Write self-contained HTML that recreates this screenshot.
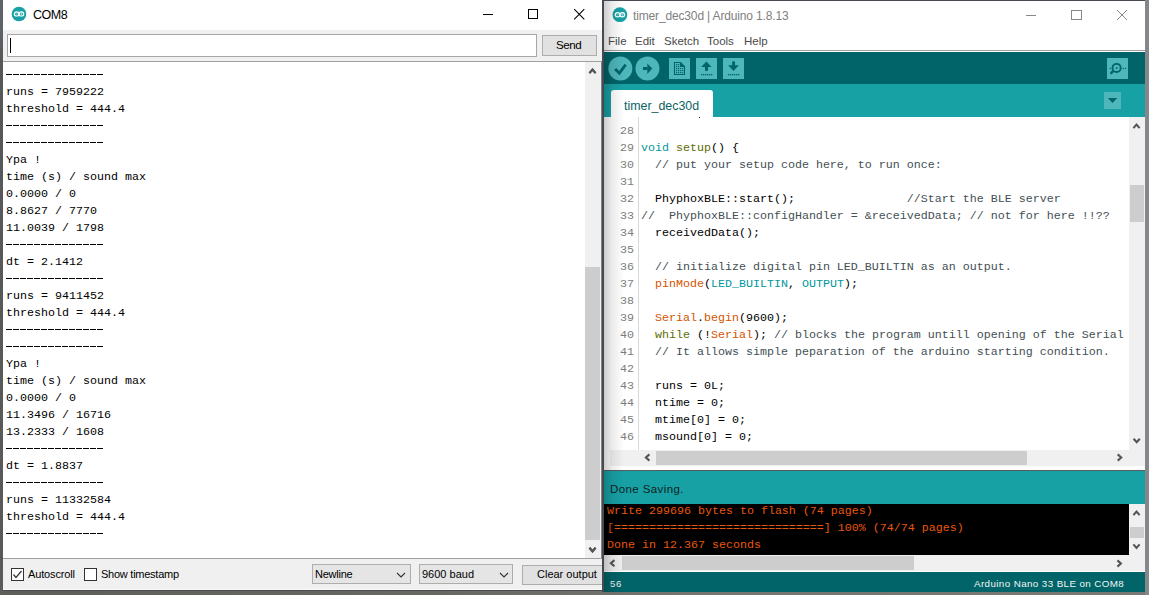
<!DOCTYPE html>
<html><head><meta charset="utf-8">
<style>
*{margin:0;padding:0;box-sizing:border-box}
html,body{width:1149px;height:595px;overflow:hidden;background:#6a6c6e}
body{position:relative;font-family:"Liberation Sans",sans-serif}
.a{position:absolute}
.mono{font-family:"Liberation Mono",monospace;font-size:11.67px;white-space:pre;line-height:17px}
.ui{font-size:11px;color:#000;white-space:pre;line-height:13px}
.dash{left:6px;width:98px;height:1px;background:repeating-linear-gradient(to right,#000 0,#000 6px,transparent 6px,transparent 7px)}
.k{color:#00979C}.f{color:#D35400}.o{color:#5E6D03}.c{color:#434F54}
</style></head><body>
<!-- desktop -->
<div class="a" style="left:0;top:0;width:3px;height:595px;background:linear-gradient(#5e6368,#5e6368 30px,#55585a 60px,#5a5a58)"></div>
<div class="a" style="left:0;top:590px;width:1149px;height:5px;background:linear-gradient(to right,#5f5e5b,#6a6864 40%,#767471 60%,#7a7875)"></div>
<div class="a" style="left:3px;top:590px;width:599px;height:1px;background:#4a4a48"></div>
<div class="a" style="left:1145px;top:0;width:4px;height:595px;background:#85878a"></div>

<!-- ============ COM8 window ============ -->
<div class="a" style="left:3px;top:0;width:599px;height:590px;background:#fff"></div>
<!-- title -->
<svg class="a" style="left:11px;top:6px" width="16" height="16"><circle cx="8" cy="8" r="7.3" fill="#16A1A4"/><g fill="none" stroke="#fff" stroke-width="1.2"><ellipse cx="5.7" cy="7.9" rx="2.4" ry="2.1"/><ellipse cx="10.3" cy="7.9" rx="2.4" ry="2.1"/></g><path d="M4.6 8 H6.6 M9.4 8 H11.4 M10.4 7 V9" stroke="#bfe6e7" stroke-width="0.7"/></svg>
<div class="a" style="left:33px;top:8px;font-size:12.5px;color:#000;letter-spacing:-0.5px">COM8</div>
<svg class="a" style="left:470px;top:0" width="130" height="30">
  <line x1="13" y1="14.5" x2="23" y2="14.5" stroke="#000" stroke-width="1"/>
  <rect x="58.5" y="9.5" width="9" height="9" fill="none" stroke="#000" stroke-width="1"/>
  <path d="M104.2 9.2 L114.3 19.3 M114.3 9.2 L104.2 19.3" stroke="#000" stroke-width="1.05"/>
</svg>
<!-- input panel -->
<div class="a" style="left:3px;top:30px;width:599px;height:31px;background:#F0F0F0"></div>
<div class="a" style="left:3px;top:61px;width:599px;height:1px;background:#A0A0A0"></div>
<div class="a" style="left:7px;top:34px;width:530px;height:23px;background:#fff;border:1px solid #A6A6A6"></div>
<div class="a" style="left:10px;top:38px;width:1px;height:15px;background:#000"></div>
<div class="a" style="left:542px;top:35px;width:55px;height:21px;background:#E1E1E1;border:1px solid #ADADAD"></div>
<div class="a ui" style="left:556px;top:37.5px;font-size:11.6px;letter-spacing:-0.45px">Send</div>
<!-- serial text -->
<div class="a mono" style="left:6px;top:67px;color:#000">
runs = 7959222
threshold = 444.4


Ypa !
time (s) / sound max
0.0000 / 0
8.8627 / 7770
11.0039 / 1798

dt = 2.1412

runs = 9411452
threshold = 444.4


Ypa !
time (s) / sound max
0.0000 / 0
11.3496 / 16716
13.2333 / 1608

dt = 1.8837

runs = 11332584
threshold = 444.4
</div>
<div class="a dash" style="top:74px"></div>
<div class="a dash" style="top:125px"></div>
<div class="a dash" style="top:142px"></div>
<div class="a dash" style="top:244px"></div>
<div class="a dash" style="top:278px"></div>
<div class="a dash" style="top:329px"></div>
<div class="a dash" style="top:346px"></div>
<div class="a dash" style="top:448px"></div>
<div class="a dash" style="top:482px"></div>
<div class="a dash" style="top:533px"></div>
<!-- scrollbar -->
<div class="a" style="left:585px;top:62px;width:15px;height:496px;background:#F0F0F0"></div>
<div class="a" style="left:585px;top:267px;width:15px;height:273px;background:#CDCDCD"></div>
<div class="a" style="left:600px;top:62px;width:1px;height:496px;background:#F2F2F2"></div>
<div class="a" style="left:601px;top:62px;width:1px;height:497px;background:#7d848c"></div>
<svg class="a" style="left:585px;top:62px" width="15" height="496">
</svg>
<!-- bottom bar -->
<div class="a" style="left:3px;top:558px;width:599px;height:32px;background:#F0F0F0;border-top:1px solid #A0A0A0;border-bottom:1px solid #fafafa"></div>
<div class="a" style="left:11px;top:568px;width:13px;height:13px;background:#fff;border:1px solid #333"></div>
<svg class="a" style="left:11px;top:568px" width="13" height="13"><path d="M2.5 6.5 L5 9.5 L10.5 3" fill="none" stroke="#333" stroke-width="1.2"/></svg>
<div class="a ui" style="left:28px;top:568px;letter-spacing:-0.15px">Autoscroll</div>
<div class="a" style="left:84px;top:568px;width:13px;height:13px;background:#fff;border:1px solid #333"></div>
<div class="a ui" style="left:101px;top:568px;letter-spacing:-0.25px">Show timestamp</div>
<div class="a" style="left:312px;top:564px;width:99px;height:20px;background:#E5E5E5;border:1px solid #ADADAD"></div>
<div class="a ui" style="left:315px;top:568px;letter-spacing:-0.25px">Newline</div>
<svg class="a" style="left:396px;top:571px" width="10" height="8"><path d="M1 2 L5 6 L9 2" fill="none" stroke="#333" stroke-width="1.1"/></svg>
<div class="a" style="left:419px;top:564px;width:94px;height:20px;background:#E5E5E5;border:1px solid #ADADAD"></div>
<div class="a ui" style="left:422px;top:568px">9600 baud</div>
<svg class="a" style="left:498.5px;top:571px" width="10" height="8"><path d="M1 2 L5 6 L9 2" fill="none" stroke="#333" stroke-width="1.1"/></svg>
<div class="a" style="left:522px;top:565px;width:82px;height:20px;background:#E1E1E1;border:1px solid #ADADAD"></div>
<div class="a ui" style="left:537px;top:568px">Clear output</div>

<!-- ============ Arduino window ============ -->
<div class="a" style="left:602px;top:0;width:2px;height:592px;background:#474b51"></div>
<div class="a" style="left:604px;top:0;width:541px;height:592px;background:#fff;border-top:1px solid #474b51"></div>
<svg class="a" style="left:612px;top:7px" width="16" height="16"><circle cx="7.9" cy="7.7" r="7.4" fill="#16A1A4"/><g fill="none" stroke="#fff" stroke-width="1.2"><ellipse cx="5.6" cy="7.7" rx="2.4" ry="2.1"/><ellipse cx="10.2" cy="7.7" rx="2.4" ry="2.1"/></g><path d="M4.4 7.8 H6.4 M9.2 7.8 H11.2 M10.2 6.8 V8.8" stroke="#bfe6e7" stroke-width="0.7"/></svg>
<div class="a" style="left:633px;top:9px;font-size:12px;color:#808080;letter-spacing:-0.15px;white-space:pre">timer_dec30d | Arduino 1.8.13</div>
<svg class="a" style="left:1010px;top:0" width="135" height="30">
  <line x1="16" y1="15.5" x2="26" y2="15.5" stroke="#888" stroke-width="1"/>
  <rect x="61.5" y="10.5" width="10" height="9" fill="none" stroke="#888" stroke-width="1"/>
  <path d="M107 10 L117 20 M117 10 L107 20" stroke="#888" stroke-width="1"/>
</svg>
<!-- menu -->
<div class="a" style="left:608px;top:34.5px;font-size:11.5px;color:#4a4a4a;white-space:pre">File</div>
<div class="a" style="left:635px;top:34.5px;font-size:11.5px;color:#4a4a4a;white-space:pre">Edit</div>
<div class="a" style="left:664px;top:34.5px;font-size:11.5px;color:#4a4a4a;white-space:pre">Sketch</div>
<div class="a" style="left:707px;top:34.5px;font-size:11.5px;color:#4a4a4a;white-space:pre">Tools</div>
<div class="a" style="left:744px;top:34.5px;font-size:11.5px;color:#4a4a4a;white-space:pre">Help</div>
<div class="a" style="left:604px;top:50px;width:541px;height:1px;background:#A0A0A0"></div>
<!-- toolbar -->
<div class="a" style="left:604px;top:52px;width:541px;height:32px;background:#006468"></div>
<svg class="a" style="left:604px;top:52px" width="541" height="32">
  <g fill="#4DB7BB">
    <circle cx="16.35" cy="16.4" r="12"/>
    <circle cx="43.45" cy="16.4" r="12"/>
    <rect x="65" y="6" width="21" height="21"/>
    <rect x="92" y="6" width="21" height="21"/>
    <rect x="119" y="6" width="21" height="21"/>
    <rect x="503" y="6" width="21" height="21"/>
  </g>
  <path d="M11.1 16.9 L15.4 21.2 L21.7 12.6" fill="none" stroke="#006468" stroke-width="2.8"/>
  <rect x="39" y="15" width="4.5" height="3" fill="#006468"/>
  <path d="M43.3 11.6 L48.3 16.5 L43.3 21.9 Z" fill="#006468"/>
  <path d="M70.5 10.5 L76.5 10.5 L80.5 14.5 L80.5 22.5 L70.5 22.5 Z" fill="none" stroke="#006468" stroke-width="1.1"/>
  <path d="M76 10 L81 15 L76 15 Z" fill="#006468"/>
  <g fill="#006468">
    <rect x="72" y="12" width="1.2" height="1.2"/><rect x="74" y="12" width="1.2" height="1.2"/>
    <rect x="72" y="14" width="1.2" height="1.2"/><rect x="74" y="14" width="1.2" height="1.2"/>
    <rect x="72" y="16" width="1.2" height="1.2"/><rect x="74" y="16" width="1.2" height="1.2"/><rect x="76" y="16" width="1.2" height="1.2"/><rect x="78" y="16" width="1.2" height="1.2"/>
    <rect x="72" y="18" width="1.2" height="1.2"/><rect x="74" y="18" width="1.2" height="1.2"/><rect x="76" y="18" width="1.2" height="1.2"/><rect x="78" y="18" width="1.2" height="1.2"/>
    <rect x="72" y="20" width="1.2" height="1.2"/><rect x="74" y="20" width="1.2" height="1.2"/><rect x="76" y="20" width="1.2" height="1.2"/><rect x="78" y="20" width="1.2" height="1.2"/>
  </g>
  <path d="M97.2 15 L102.4 9.4 L107.6 15 Z" fill="#006468"/>
  <rect x="101" y="14.5" width="3" height="4.3" fill="#006468"/>
  <path d="M124.2 13.3 L134.8 13.3 L129.5 18.9 Z" fill="#006468"/>
  <rect x="128.2" y="9.4" width="2.8" height="4.3" fill="#006468"/>
  <g fill="#006468">
    <rect x="97" y="22" width="1.3" height="1.3"/><rect x="99" y="22" width="1.3" height="1.3"/><rect x="101" y="22" width="1.3" height="1.3"/><rect x="103" y="22" width="1.3" height="1.3"/><rect x="105" y="22" width="1.3" height="1.3"/><rect x="107" y="22" width="1.3" height="1.3"/>
    <rect x="124" y="22" width="1.3" height="1.3"/><rect x="126" y="22" width="1.3" height="1.3"/><rect x="128" y="22" width="1.3" height="1.3"/><rect x="130" y="22" width="1.3" height="1.3"/><rect x="132" y="22" width="1.3" height="1.3"/><rect x="134" y="22" width="1.3" height="1.3"/>
  </g>
  <circle cx="512.6" cy="15.9" r="4.1" fill="none" stroke="#006468" stroke-width="1.8"/>
  <rect x="511.9" y="15.2" width="1.6" height="1.6" fill="#006468"/>
  <path d="M509.3 18.9 L506.6 21.8" stroke="#006468" stroke-width="2.4"/>
  <g fill="#006468"><rect x="505.8" y="15.9" width="1.2" height="1.2"/><rect x="518.7" y="15.9" width="1.2" height="1.2"/><rect x="521" y="15.9" width="1.2" height="1.2"/></g>
</svg>
<!-- tab band -->
<div class="a" style="left:604px;top:84px;width:541px;height:33px;background:#17A1A5"></div>
<div class="a" style="left:611px;top:90px;width:102px;height:27px;background:#fff;border-radius:3px 3px 0 0"></div>
<div class="a" style="left:624px;top:99px;font-size:12.4px;color:#0B6265;white-space:pre">timer_dec30d</div>
<div class="a" style="left:1104px;top:92px;width:17px;height:17px;background:#4DB7BB"></div>
<svg class="a" style="left:1104px;top:92px" width="17" height="17"><path d="M3.9 6.1 L13.3 6.1 L8.5 10.9 Z" fill="#006468"/></svg>
<!-- editor -->
<div class="a" style="left:604px;top:117px;width:525px;height:333px;background:#fff"></div>
<div class="a" style="left:638px;top:117px;width:1px;height:333px;background:#D8D8D8"></div>
<div class="a mono" style="left:613px;top:123px;color:#7c7c7c;text-align:right;width:21px;-webkit-text-stroke:0">28
29
30
31
32
33
34
35
36
37
38
39
40
41
42
43
44
45
46</div>
<div class="a mono" style="left:641px;top:123px;color:#000">
<span class="k">void</span> <span class="o">setup</span>() {
  <span class="c">// put your setup code here, to run once:</span>

  PhyphoxBLE::start();                <span class="c">//Start the BLE server</span>
<span class="c">//  PhyphoxBLE::configHandler = &amp;receivedData; // not for here !!??</span>
  receivedData();

  <span class="c">// initialize digital pin LED_BUILTIN as an output.</span>
  <span class="f">pinMode</span>(<span class="k">LED_BUILTIN</span>, <span class="k">OUTPUT</span>);

  <span class="f">Serial</span>.<span class="f">begin</span>(9600);
  <span class="o">while</span> (!<span class="f">Serial</span>); <span class="c">// blocks the program untill opening of the Serial</span>
  <span class="c">// It allows simple peparation of the arduino starting condition.</span>

  runs = 0L;
  ntime = 0;
  mtime[0] = 0;
  msound[0] = 0;</div>
<svg class="a" style="left:0;top:0" width="1149" height="595"><g fill="none" stroke="#555" stroke-width="2.1"><path d="M589.4 73.1 L592.5 69.6 L595.6 73.1"/><path d="M589.4 547.8 L592.5 551.3 L595.6 547.8"/><path d="M1133.4 128.1 L1136.5 124.6 L1139.6 128.1"/><path d="M1133.6 438.7 L1136.7 442.2 L1139.8 438.7"/><path d="M1133.4 515.1 L1136.5 511.6 L1139.6 515.1"/><path d="M1133.4 544.4 L1136.5 547.9 L1139.6 544.4"/><path d="M649.4 454.4 L645.9 457.5 L649.4 460.6"/><path d="M1117.7 454.4 L1121.2 457.5 L1117.7 460.6"/><path d="M614.4 560.1 L610.9 563.2 L614.4 566.3"/><path d="M1117.4 560.4 L1120.9 563.5 L1117.4 566.6"/></g></svg>
<!-- shadow from COM8 -->

<div class="a" style="left:699px;top:117px;width:1px;height:1px;background:#223"></div>
<!-- editor vscroll -->
<div class="a" style="left:1129px;top:117px;width:16px;height:349px;background:#F0F0F0"></div>
<div class="a" style="left:1130px;top:185px;width:14px;height:37px;background:#CDCDCD"></div>
<svg class="a" style="left:1129px;top:117px" width="16" height="333">
</svg>
<!-- editor hscroll -->
<div class="a" style="left:610px;top:450px;width:535px;height:16px;background:#F0F0F0"></div>
<div class="a" style="left:656px;top:451px;width:371px;height:14px;background:#CDCDCD"></div>
<svg class="a" style="left:604px;top:450px" width="541" height="16">
</svg>
<div class="a" style="left:604px;top:466px;width:541px;height:4px;background:#FFFFFF"></div>
<div class="a" style="left:604px;top:470px;width:541px;height:1px;background:#5a5a5a"></div>
<!-- status -->
<div class="a" style="left:604px;top:471px;width:541px;height:33px;background:#17A1A5"></div>
<div class="a" style="left:610px;top:483px;font-size:11.5px;letter-spacing:0.4px;color:#0d2222;white-space:pre">Done Saving.</div>
<!-- console -->
<div class="a" style="left:604px;top:504px;width:525px;height:51px;background:#000"></div>
<div class="a mono" style="left:607px;top:503px;color:#E8580C">Write 299696 bytes to flash (74 pages)
[==============================] 100% (74/74 pages)
Done in 12.367 seconds</div>
<div class="a" style="left:1129px;top:504px;width:16px;height:51px;background:#F0F0F0"></div>
<div class="a" style="left:1130px;top:527px;width:14px;height:11px;background:#CDCDCD"></div>
<svg class="a" style="left:1129px;top:504px" width="16" height="51">
</svg>
<div class="a" style="left:604px;top:555px;width:541px;height:16px;background:#F0F0F0"></div>
<div class="a" style="left:622px;top:556px;width:292px;height:14px;background:#CDCDCD"></div>
<svg class="a" style="left:604px;top:555px" width="541" height="16">
</svg>

<div class="a" style="left:604px;top:572px;width:541px;height:20px;background:#006468"></div>
<div class="a" style="left:610px;top:578px;font-size:9.6px;letter-spacing:0.6px;color:#f4f4f4">56</div>
<div class="a" style="left:974px;top:577.5px;font-size:9.8px;letter-spacing:0.4px;color:#f4f4f4;white-space:pre">Arduino Nano 33 BLE on COM8</div>
<svg class="a" style="left:0;top:0" width="1149" height="595"><g fill="none" stroke="#555" stroke-width="2.1"><path d="M589.4 73.1 L592.5 69.6 L595.6 73.1"/><path d="M589.4 547.8 L592.5 551.3 L595.6 547.8"/><path d="M1133.4 128.1 L1136.5 124.6 L1139.6 128.1"/><path d="M1133.6 438.7 L1136.7 442.2 L1139.8 438.7"/><path d="M1133.4 515.1 L1136.5 511.6 L1139.6 515.1"/><path d="M1133.4 544.4 L1136.5 547.9 L1139.6 544.4"/><path d="M649.4 454.4 L645.9 457.5 L649.4 460.6"/><path d="M1117.7 454.4 L1121.2 457.5 L1117.7 460.6"/><path d="M614.4 560.1 L610.9 563.2 L614.4 566.3"/><path d="M1117.4 560.4 L1120.9 563.5 L1117.4 566.6"/></g></svg>
<!-- shadow from COM8 -->
<div class="a" style="left:604px;top:1px;width:20px;height:591px;background:linear-gradient(to right,rgba(0,0,0,0.2),rgba(0,0,0,0.08) 40%,rgba(0,0,0,0))"></div>
</body></html>
